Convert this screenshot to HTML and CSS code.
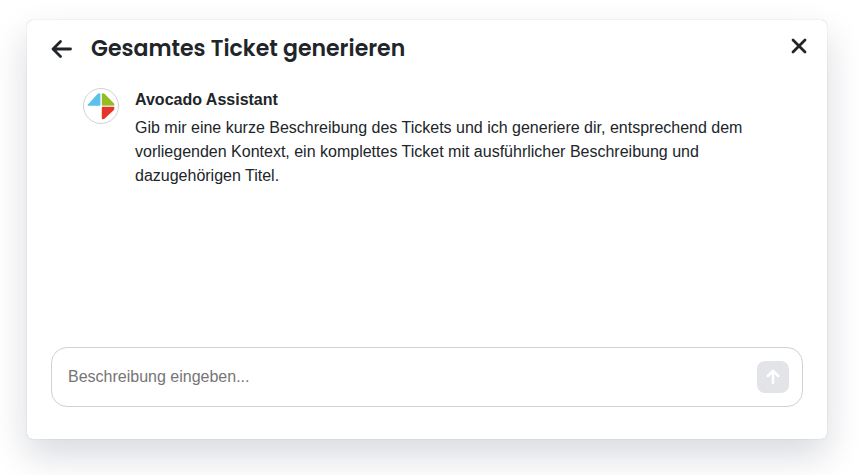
FILE: index.html
```html
<!DOCTYPE html>
<html lang="de">
<head>
    <meta charset="UTF-8">
    <meta name="viewport" content="width=device-width, initial-scale=1.0">
    <title>Gesamtes Ticket generieren</title>
    <link rel="stylesheet" href="styles.css">
</head>
<body>
    <main class="dialog">
        <header class="dialog-header">
            <button type="button" class="icon-btn" aria-label="Zurück">
                <svg width="22" height="20" viewBox="0 0 22 20" fill="none" stroke="currentColor" stroke-width="2.800" stroke-linecap="round" stroke-linejoin="round">
                    <path d="M19.500 10H2.500M9.500 2.500L2 10l7.500 7.500"/>
                </svg>
            </button>
            <h1 class="dialog-title">Gesamtes Ticket generieren</h1>
            <button type="button" class="icon-btn close-btn" aria-label="Schließen">
                <svg width="16" height="16" viewBox="0 0 16 16" fill="none" stroke="currentColor" stroke-width="2.800" stroke-linecap="round">
                    <path d="M2 2l12 12M14 2L2 14"/>
                </svg>
            </button>
        </header>

        <section class="message">
            <div class="avatar">
                <svg width="28" height="28" viewBox="0 0 28 28">
                    <path fill="#5bc1ec" d="M.7 12.700L10.500 2Q11.300 1.200 12.500 1.200q.9 0 .9 1v10.300q0 1.200-1.200 1.200H1.200q-1 0-.5-1z"/>
                    <path fill="#95bc22" d="M14.800 2.200q0-1 1-1 1.200 0 2 .8l9.500 9.800q.6 1.900-.8 1.900H16q-1.200 0-1.200-1.200z"/>
                    <path fill="#e5342a" d="M16 14.800h10.200q1.200 0 1.200 1.200 0 1.400-.8 2.200l-8.800 8.300q-1 .8-2 .8-1 0-1-1V16q0-1.200 1.200-1.200z"/>
                    <path stroke="#f1d9b8" d="M16 14.200h11"/>
                </svg>
            </div>
            <div class="message-body">
                <h2 class="message-author">Avocado Assistant</h2>
                <p class="message-text">Gib mir eine kurze Beschreibung des Tickets und ich generiere dir, entsprechend dem vorliegenden Kontext, ein komplettes Ticket mit ausführlicher Beschreibung und dazugehörigen Titel.</p>
            </div>
        </section>

        <form class="composer">
            <input type="text" class="composer-input" aria-label="Beschreibung" placeholder="Beschreibung eingeben...">
            <button type="submit" class="send-btn" aria-label="Senden" disabled>
                <svg width="14" height="16" viewBox="0 0 14 16" fill="none" stroke="currentColor" stroke-width="2.500" stroke-linecap="round" stroke-linejoin="round">
                    <path d="M7 14V2M1.800 7L7 1.800 12.200 7"/>
                </svg>
            </button>
        </form>
    </main>
</body>
</html>
```
FILE: styles.css
```css
* {
    margin: 0;
    padding: 0;
    box-sizing: border-box;
}

body {
    display: flex;
    min-height: 100vh;
    padding: 20px 31px 36px 27px;
    background: #fff;
    color: #212529;
    font-family: Arial, "Liberation Sans", sans-serif;
    font-size: 16px;
    line-height: 24px;
}

.dialog {
    display: flex;
    flex-direction: column;
    flex: 1;
    padding: 12px 24px 32px;
    background: #fff;
    border-radius: 6px;
    box-shadow: 0 0 1px rgba(9, 30, 66, 0.3), 0 16px 36px rgba(9, 20, 50, 0.16);
}

.dialog-header {
    display: flex;
    align-items: center;
    gap: 18px;
    height: 34px;
}

.dialog-title {
    flex: 1;
    font-family: Poppins, Inter, sans-serif;
    font-size: 22px;
    font-weight: 600;
    line-height: 34px;
}

.icon-btn {
    display: flex;
    border: none;
    background: none;
    color: #212529;
    cursor: pointer;
}

.close-btn {
    align-self: flex-start;
    margin: 6px -4px 0 0;
}

.message {
    display: flex;
    flex: 1;
    gap: 16px;
    padding: 22px 32px;
}

.avatar {
    display: flex;
    flex: none;
    align-items: center;
    justify-content: center;
    width: 36px;
    height: 36px;
    border: 1px solid #d0d1d9;
    border-radius: 50%;
}

.message-author {
    margin-bottom: 4px;
    font-size: 16px;
    font-weight: bold;
    line-height: 24px;
}

.composer {
    display: flex;
    align-items: center;
    height: 60px;
    padding: 0 13px 0 16px;
    border: 1px solid #d0d1d6;
    border-radius: 16px;
}

.composer-input {
    flex: 1;
    min-width: 0;
    height: 40px;
    border: none;
    outline: none;
    background: none;
    color: #212529;
    font: inherit;
}

.composer-input::placeholder {
    color: #757575;
}

.send-btn {
    display: flex;
    align-items: center;
    justify-content: center;
    width: 32px;
    height: 32px;
    border: none;
    border-radius: 8px;
    background: #e3e4e8;
    color: #fff;
}
```
